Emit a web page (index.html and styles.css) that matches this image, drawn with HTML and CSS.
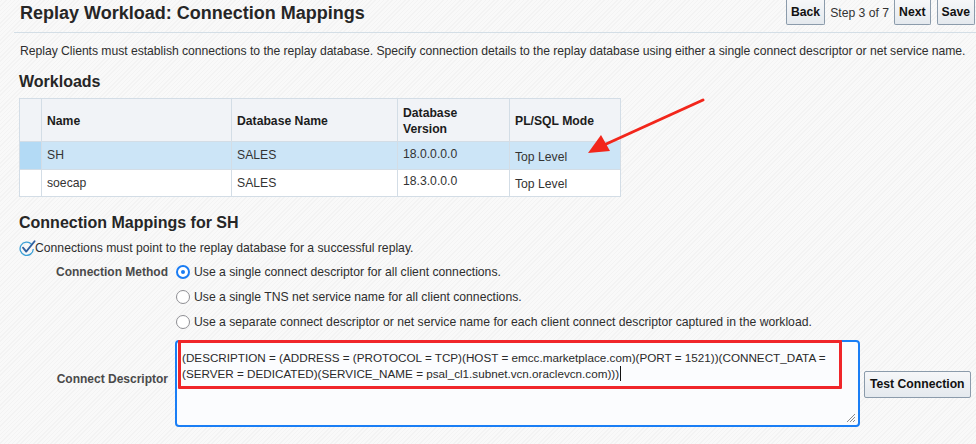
FILE: index.html
```html
<!DOCTYPE html>
<html>
<head>
<meta charset="utf-8">
<link rel="stylesheet" href="styles.css">
</head>
<body>
<div class="page">
  <header class="topbar">
    <h1 class="title">Replay Workload: Connection Mappings</h1>
    <div class="train">
      <button class="btn">Back</button>
      <span class="step">Step 3 of 7</span>
      <button class="btn">Next</button>
      <button class="btn">Save</button>
    </div>
  </header>

  <main class="content">
    <p class="intro">Replay Clients must establish connections to the replay database. Specify connection details to the replay database using either a single connect descriptor or net service name.</p>

    <h2 class="section">Workloads</h2>
    <table class="grid">
      <colgroup>
        <col class="w-sel"><col class="w-name"><col class="w-db"><col class="w-ver"><col class="w-mode">
      </colgroup>
      <thead>
        <tr>
          <th></th>
          <th>Name</th>
          <th>Database Name</th>
          <th>Database<br>Version</th>
          <th>PL/SQL Mode</th>
        </tr>
      </thead>
      <tbody>
        <tr class="selected">
          <td class="sel"></td>
          <td>SH</td>
          <td>SALES</td>
          <td class="ver">18.0.0.0.0</td>
          <td class="mode">Top Level</td>
        </tr>
        <tr>
          <td class="sel"></td>
          <td>soecap</td>
          <td>SALES</td>
          <td class="ver">18.3.0.0.0</td>
          <td class="mode">Top Level</td>
        </tr>
      </tbody>
    </table>

    <h2 class="section section-2">Connection Mappings for SH</h2>
    <div class="note">
      <svg class="note-icon" width="17" height="16" viewBox="0 0 17 16">
        <path d="M12.5 4.2 A6.6 6.6 0 1 0 14.3 9" fill="none" stroke="#3a9fd6" stroke-width="1.3"/>
        <path d="M4 7.6 L7.2 11.6 L15.6 1.2" fill="none" stroke="#2f5f9e" stroke-width="1.8" stroke-linecap="round" stroke-linejoin="round"/>
      </svg>
      <span>Connections must point to the replay database for a successful replay.</span>
    </div>

    <div class="form">
      <div class="label lbl-method">Connection Method</div>
      <div class="radios">
        <label class="radio"><span class="dot on"></span>Use a single connect descriptor for all client connections.</label>
        <label class="radio"><span class="dot"></span>Use a single TNS net service name for all client connections.</label>
        <label class="radio"><span class="dot"></span>Use a separate connect descriptor or net service name for each client connect descriptor captured in the workload.</label>
      </div>

      <div class="label lbl-desc">Connect Descriptor</div>
      <div class="desc-row">
        <div class="textarea">
          <div class="ta-text">(DESCRIPTION = (ADDRESS = (PROTOCOL = TCP)(HOST = emcc.marketplace.com)(PORT = 1521))(CONNECT_DATA =<br>(SERVER = DEDICATED)(SERVICE_NAME = psal_cl1.subnet.vcn.oraclevcn.com)))<span class="caret"></span></div>
          <div class="highlight"></div>
          <svg class="grip" width="10" height="10" viewBox="0 0 10 10">
            <path d="M9 1 L1 9 M9 4 L4 9 M9 7 L7 9" stroke="#8a8a8a" stroke-width="1"/>
          </svg>
        </div>
        <button class="btn btn-test">Test Connection</button>
      </div>
    </div>
  </main>

  <svg class="arrow" width="130" height="70" viewBox="0 0 130 70">
    <line x1="121" y1="3" x2="22" y2="48" stroke="#f2261b" stroke-width="3" stroke-linecap="round"/>
    <polygon points="6,56 19,38 28,54" fill="#f2261b"/>
  </svg>
</div>
</body>
</html>
```

FILE: styles.css
```css
html, body {
  margin: 0;
  padding: 0;
}
body {
  width: 976px;
  height: 444px;
  overflow: hidden;
  font-family: "Liberation Sans", Arial, Helvetica, sans-serif;
  color: #333;
  background-color: #f6f6f6;
  background-image: repeating-linear-gradient(-45deg, #f3f3f3 0px, #f3f3f3 1px, #f9f9f9 1px, #f9f9f9 3px);
}
.page {
  position: relative;
  height: 444px;
}

/* header */
.topbar {
  margin-left: 14px;
  height: 33px;
  border-bottom: 1px solid #d3dee6;
  display: flex;
  justify-content: space-between;
  align-items: flex-start;
  box-sizing: border-box;
}
.title {
  margin: 0;
  padding: 3px 0 0 6px;
  font-size: 18px;
  line-height: 21px;
  font-weight: bold;
  color: #262626;
}
.train {
  display: flex;
  align-items: center;
  height: 25px;
  margin-right: 1px;
}
.btn {
  font-family: "Liberation Sans", Arial, sans-serif;
  font-size: 12.2px;
  font-weight: bold;
  color: #111;
  background: linear-gradient(#f6f7f9, #e4e9ee);
  border: 1px solid #8b9bab;
  border-radius: 2px;
  height: 25px;
  padding: 0 5px;
  margin: 0;
  line-height: 23px;
  white-space: nowrap;
}
.train .btn {
  border-top: none;
  border-radius: 0 0 2px 2px;
  height: 25px;
  padding: 0 4px;
}
.step {
  font-size: 12.2px;
  color: #333;
  padding: 0 5px 0 5px;
}
.train .btn + .btn {
  margin-left: 6px;
}

/* content */
.content {
  padding-left: 19px;
}
.intro {
  margin: 10px 0 0 1px;
  font-size: 12.2px;
  letter-spacing: -0.04px;
  line-height: 16px;
  color: #2e2e2e;
  white-space: nowrap;
}
.section {
  margin: 13px 0 0 0;
  font-size: 16px;
  line-height: 19px;
  font-weight: bold;
  color: #262626;
}
.section-2 {
  margin-top: 16px;
}

/* table */
.grid {
  margin-top: 7px;
  border-collapse: collapse;
  table-layout: fixed;
  width: 601px;
  font-size: 12.2px;
  background: #fff;
  border: 1px solid #d3dde6;
}
.w-sel { width: 22px; }
.w-name { width: 190px; }
.w-db { width: 166px; }
.w-ver { width: 112px; }
.w-mode { width: 111px; }
.grid th, .grid td {
  border: 1px solid #d3dde6;
  text-align: left;
  padding: 0 5px;
  box-sizing: border-box;
}
.grid th {
  background: #f1f3f7;
  font-weight: bold;
  color: #1c1c1c;
  height: 43px;
  line-height: 16px;
  padding-top: 2px;
}
.grid td {
  color: #333;
  height: 27px;
  line-height: 15px;
}
.grid tbody tr:first-child td {
  height: 28px;
}
.grid td.ver { padding-bottom: 3px; }
.grid td.mode { padding-top: 3px; }
.selected td {
  background: #cce5f7;
}
.selected td.sel {
  background: #b3daf5;
}

/* note */
.note {
  display: flex;
  align-items: center;
  margin-top: 8px;
  font-size: 12.2px;
  line-height: 16px;
  color: #2e2e2e;
}
.note-icon {
  display: block;
  margin-right: -1px;
}

/* form */
.form {
  display: grid;
  grid-template-columns: 149px 1fr;
  column-gap: 7px;
  margin-top: 8px;
}
.label {
  text-align: right;
  font-size: 12px;
  font-weight: bold;
  color: #4a4a4a;
  line-height: 16px;
}
.lbl-desc {
  align-self: center;
  padding-top: 1px;
}
.radios {
  display: flex;
  flex-direction: column;
  gap: 9px;
}
.radio {
  display: flex;
  align-items: center;
  font-size: 12.2px;
  line-height: 16px;
  color: #2e2e2e;
}
.dot {
  width: 14px;
  height: 14px;
  box-sizing: border-box;
  border-radius: 50%;
  border: 1.5px solid #8e8e93;
  background: #fff;
  margin: 0 4px 0 1px;
  flex: none;
  position: relative;
}
.dot.on {
  border: 2px solid #1a7cf3;
}
.dot.on::after {
  content: "";
  position: absolute;
  left: 3px;
  top: 3px;
  width: 4px;
  height: 4px;
  border-radius: 50%;
  background: #1a7cf3;
}
.desc-row {
  display: flex;
  align-items: center;
  gap: 4px;
  margin-top: 10px;
}
.textarea {
  position: relative;
  width: 685px;
  height: 87px;
  flex: none;
  box-sizing: border-box;
  border: 2px solid #1a7ef5;
  border-radius: 4px;
  background: #fbfcfe;
  padding: 8px 0 0 5px;
}
.ta-text {
  font-size: 11.7px;
  line-height: 16px;
  color: #2a2a2a;
  white-space: nowrap;
}
.caret {
  display: inline-block;
  width: 1px;
  height: 15px;
  background: #111;
  vertical-align: -3px;
  margin-left: 1px;
}
.highlight {
  position: absolute;
  left: 1px;
  top: -2px;
  width: 664px;
  height: 49px;
  box-sizing: border-box;
  border: 3px solid #f0262a;
  border-radius: 1px;
}
.grip {
  position: absolute;
  right: 2px;
  bottom: 2px;
}
.btn-test {
  height: 27px;
  padding: 0 5px;
  border-radius: 2px;
  margin-top: 1px;
}

/* annotation arrow */
.arrow {
  position: absolute;
  left: 582px;
  top: 97px;
}
```
